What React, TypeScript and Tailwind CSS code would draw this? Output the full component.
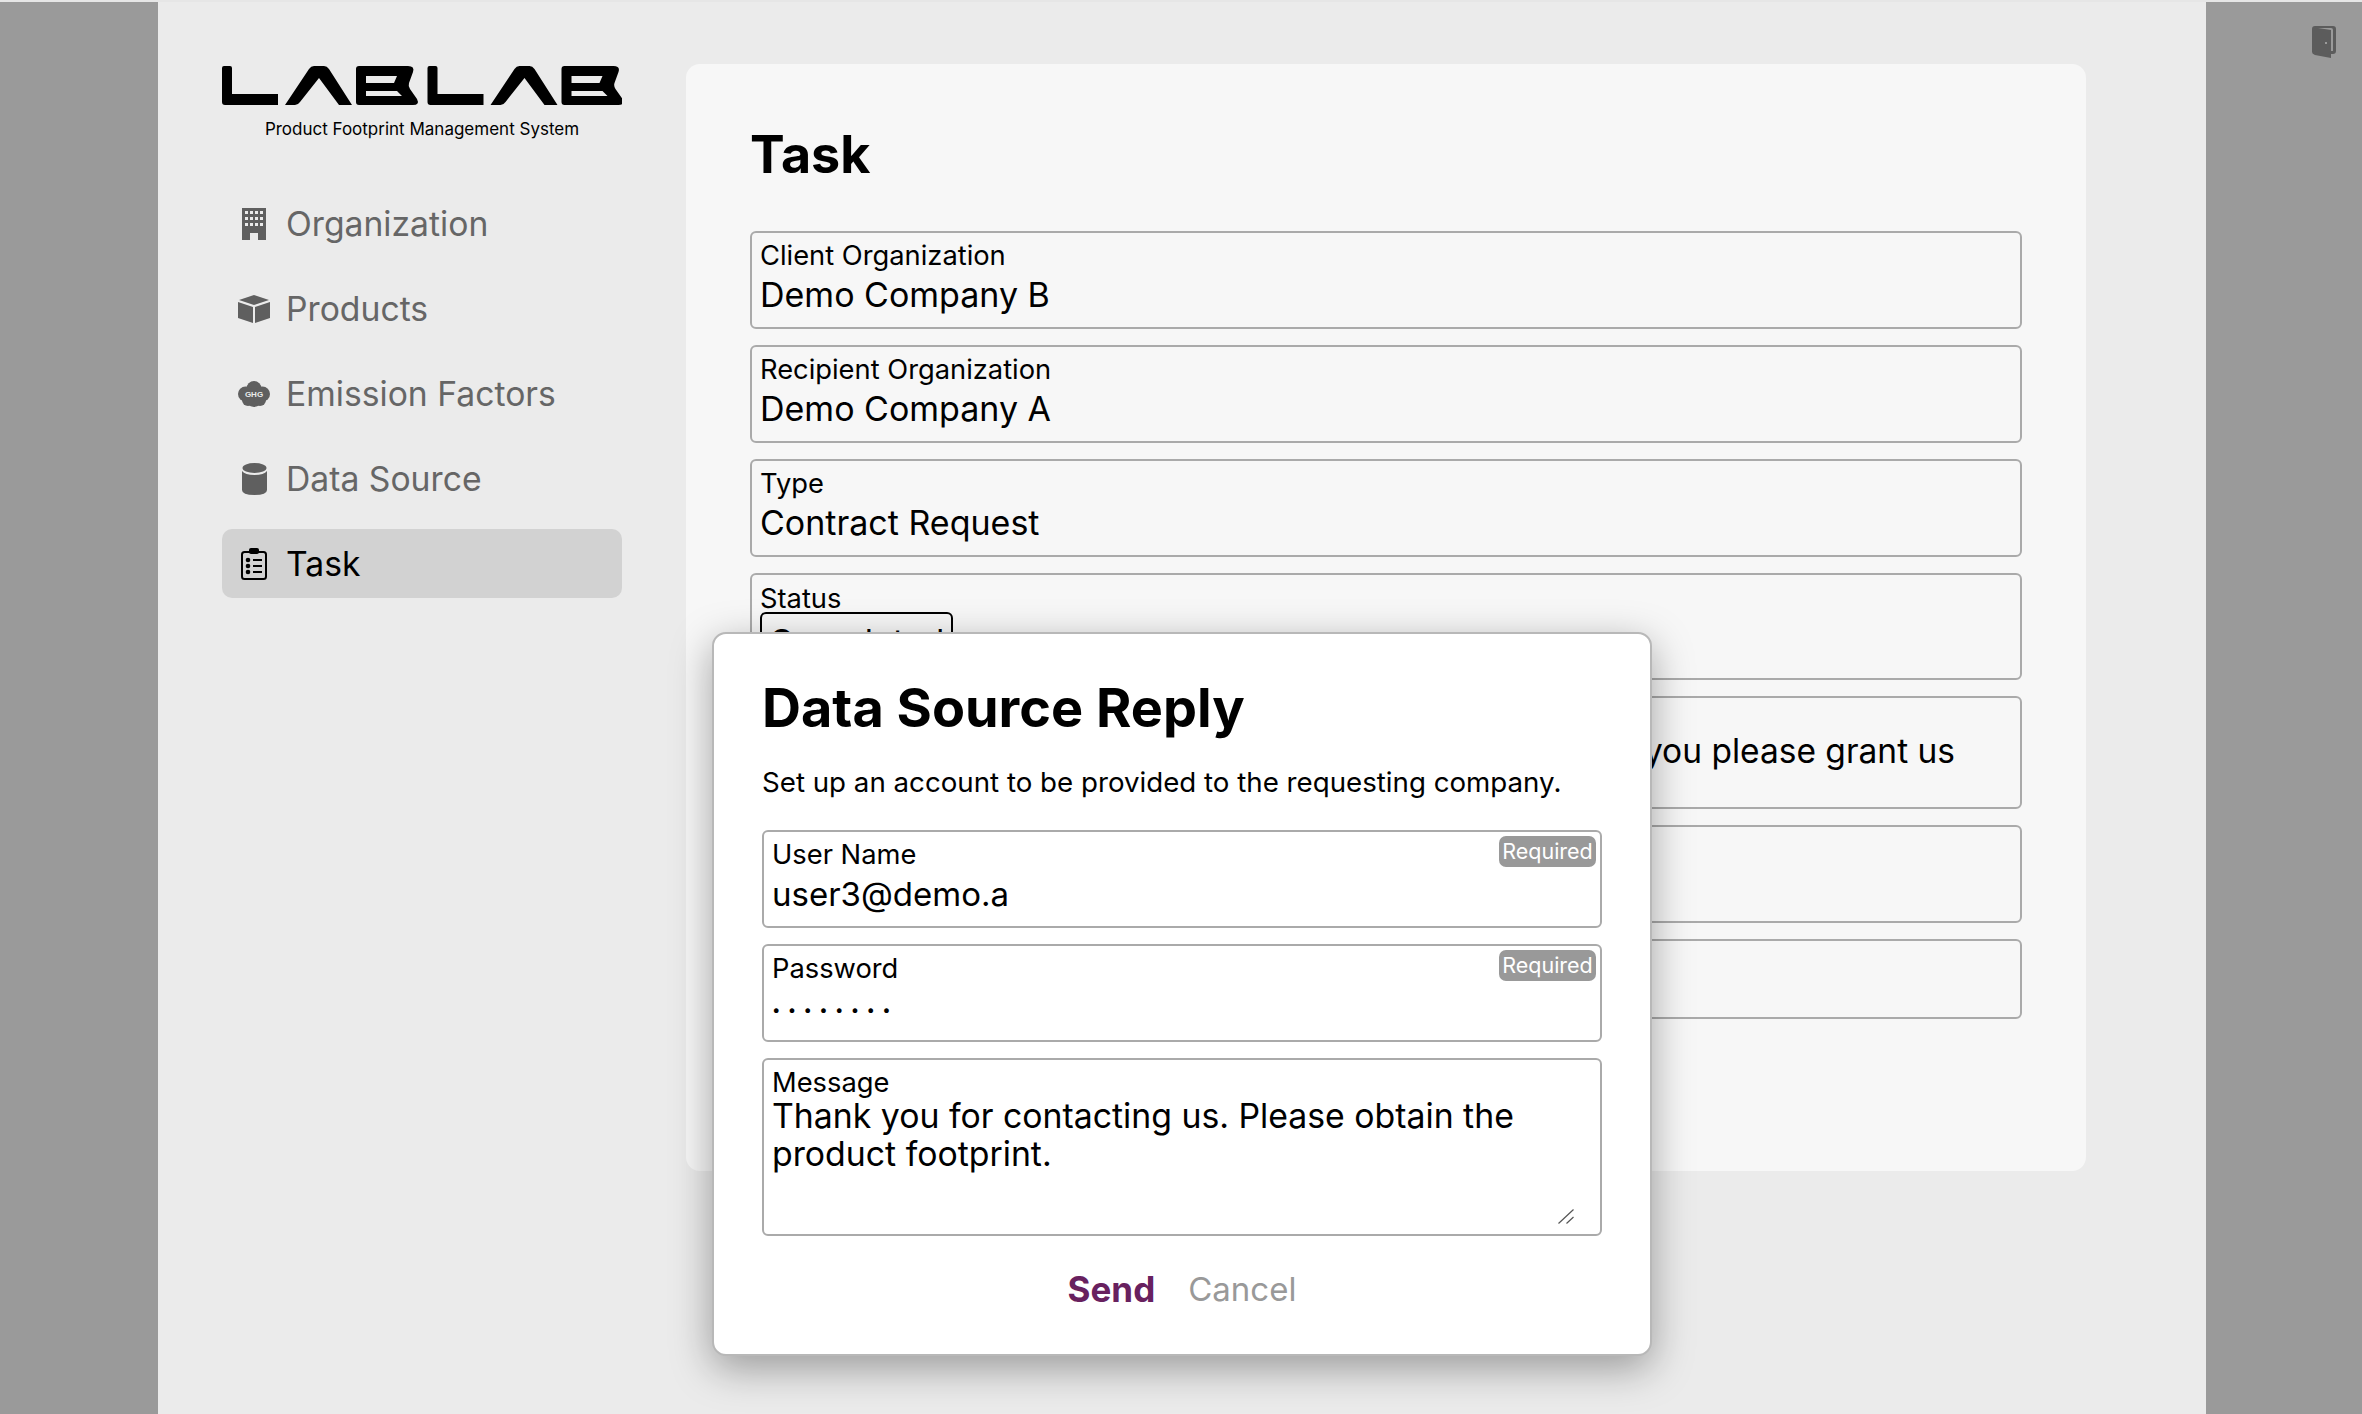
function LogoLetters() {
  return (
    <>
      <path d="M2 0h6a2 2 0 0 1 2 2v26h46v11H3a3 3 0 0 1-3-3V2a2 2 0 0 1 2-2z" />
      <path d="M63 39 87 3q2-3 5-3h10q3 0 5 3l23 36h-13L97 12 78 36q-2 3-5 3z" />
      <path
        fillRule="evenodd"
        d="M137 0h49q7 0 5 6l-4 11q-1 3 1 6l7 10q3 6-4 6h-54q-3 0-3-3V3q0-3 3-3zM144 10v7h28l3-7zM144 25v5h36l-5-5z"
      />
    </>
  );
}

function Logo() {
  return (
    <svg viewBox="0 0 400 39" className="w-[400px] h-[39px]" fill="#000">
      <LogoLetters />
      <g transform="translate(205.5 0)">
        <LogoLetters />
      </g>
    </svg>
  );
}

function BuildingIcon() {
  return (
    <svg viewBox="0 0 24 32" className="w-[24px] h-[32px]" fill="#5f5f5f">
      <path
        fillRule="evenodd"
        d="M0 0h24v32h-8v-7H8v7H0zM3 3v3h3V3zM8 3v3h3V3zM13 3v3h3V3zM18 3v3h3V3zM3 9v3h3V9zM8 9v3h3V9zM13 9v3h3V9zM18 9v3h3V9zM3 15v3h3v-3zM8 15v3h3v-3zM13 15v3h3v-3zM18 15v3h3v-3z"
      />
    </svg>
  );
}

function CubeIcon() {
  return (
    <svg viewBox="0 0 32 28" className="w-[32px] h-[28px]" fill="#5f5f5f">
      <path d="M16 0 31 5 16 10 1 5z" />
      <path d="M0 7l15 5v16L0 23z" />
      <path d="M32 7 17 12v16l15-5z" />
    </svg>
  );
}

function GhgIcon() {
  return (
    <svg viewBox="0 0 32 26" className="w-[32px] h-[26px]">
      <g fill="#5f5f5f">
        <circle cx="16" cy="7.500" r="7.500" />
        <circle cx="7.500" cy="13" r="7.500" />
        <circle cx="24.500" cy="13" r="7.500" />
        <circle cx="16" cy="17.500" r="8.500" />
        <circle cx="10" cy="19" r="6" />
        <circle cx="22" cy="19" r="6" />
      </g>
      <text x="16" y="16" textAnchor="middle" fontSize="8" fontWeight="700" fill="#ebebeb" fontFamily="'Liberation Sans', sans-serif">
        GHG
      </text>
    </svg>
  );
}

function DatabaseIcon() {
  return (
    <svg viewBox="0 0 25 32" className="w-[25px] h-[32px]" fill="#5f5f5f">
      <ellipse cx="12.5" cy="5" rx="12" ry="5" />
      <path d="M0 8q3 4 12.500 4T25 8v19q0 5-12.500 5T0 27z" />
    </svg>
  );
}

function ClipboardIcon() {
  return (
    <svg viewBox="0 0 26 32" className="w-[26px] h-[32px]" fill="none" stroke="#000">
      <rect x="1" y="4" width="24" height="27" rx="2.500" strokeWidth="2" />
      <rect x="8" y="0" width="10" height="6" rx="2" fill="#000" stroke="none" />
      <circle cx="7" cy="12" r="2.300" fill="#000" stroke="none" />
      <circle cx="7" cy="18" r="2.300" fill="#000" stroke="none" />
      <circle cx="7" cy="24" r="2.300" fill="#000" stroke="none" />
      <path d="M12 12h9M12 18h9M12 24h9" strokeWidth="2" />
    </svg>
  );
}

function DoorIcon() {
  return (
    <svg viewBox="0 0 24 33" className="w-[24px] h-[33px]">
      <path fill="#5c5c5c" d="M3 1h18q3 0 3 3v22q0 3-3 3h-2v4L3 30q-3-1-3-3V4q0-3 3-3z" />
      <path fill="#9a9a9a" d="M6 3h13q2 0 2 2v21h-2V5z" />
      <rect x="13" y="17" width="2" height="2" fill="#9a9a9a" />
    </svg>
  );
}

const navItems = [
  { label: "Organization", icon: <BuildingIcon /> },
  { label: "Products", icon: <CubeIcon /> },
  { label: "Emission Factors", icon: <GhgIcon /> },
  { label: "Data Source", icon: <DatabaseIcon /> },
  { label: "Task", icon: <ClipboardIcon />, active: true },
];

function Sidebar() {
  return (
    <aside className="w-[400px] shrink-0">
      <div className="pt-[2px]">
        <Logo />
      </div>
      <p className="mt-[12px] text-center text-[17px] leading-[24px] text-black">Product Footprint Management System</p>
      <nav className="mt-[48px] flex flex-col gap-[16px]">
        {navItems.map((item) => (
          <a
            key={item.label}
            className={
              item.active
                ? "flex h-[69px] items-center rounded-[10px] bg-[#d2d2d2] text-[33.700px] text-black"
                : "flex h-[69px] items-center rounded-[10px] text-[33.700px] text-[#666666]"
            }
          >
            <span className="flex w-[64px] shrink-0 justify-center">{item.icon}</span>
            <span className="pt-[2px]">{item.label}</span>
          </a>
        ))}
      </nav>
    </aside>
  );
}

function Field({ label, value }: { label: string; value: string }) {
  return (
    <div className="h-[98px] rounded-[6px] border-2 border-[#aaaaaa] px-[8px] pt-[5px]">
      <div className="text-[27.3px] leading-[35px] text-black">{label}</div>
      <div className="text-[34px] leading-[44px] text-black">{value}</div>
    </div>
  );
}

function RequiredBadge() {
  return (
    <span className="absolute right-[4px] top-[4px] flex h-[31px] w-[97px] items-center justify-center rounded-[7px] bg-[#999999] text-[21.500px] text-white">
      Required
    </span>
  );
}

function TaskCard() {
  return (
    <section className="h-[1107px] w-[1400px] shrink-0 rounded-[14px] bg-[#f7f7f7] px-[64px] pt-[56px]">
      <h1 className="text-[52px] font-bold leading-[70px] text-black">Task</h1>
      <div className="mt-[41px] flex flex-col gap-[16px]">
        <Field label="Client Organization" value="Demo Company B" />
        <Field label="Recipient Organization" value="Demo Company A" />
        <Field label="Type" value="Contract Request" />
        <div className="h-[107px] rounded-[6px] border-2 border-[#aaaaaa] px-[8px] pt-[5px]">
          <div className="-mb-[5px] text-[27.3px] leading-[37px] text-black">Status</div>
          <span className="inline-block rounded-[6px] border-2 border-black px-[7px] pt-[6px] text-[34px] leading-[44px] text-black">
            Completed
          </span>
        </div>
        <div className="flex h-[113px] items-center justify-end rounded-[6px] border-2 border-[#aaaaaa] px-[65px] pb-[2px]">
          <span className="text-[33.500px] text-black">Could you please grant us</span>
        </div>
        <div className="h-[98px] rounded-[6px] border-2 border-[#aaaaaa]" />
        <div className="h-[80px] rounded-[6px] border-2 border-[#aaaaaa]" />
      </div>
    </section>
  );
}

function InputField({ label, value, type }: { label: string; value: string; type: string }) {
  const isPassword = type === "password";
  return (
    <label className="relative block h-[98px] rounded-[6px] border-2 border-[#aaaaaa] px-[8px] pt-[5px]">
      <span className="block text-[27.3px] leading-[35px] text-black">{label}</span>
      <input
        readOnly
        type={type}
        value={value}
        className={
          isPassword
            ? "block h-[44px] w-full bg-transparent pt-[3px] text-[15px] tracking-[7.300px] text-black outline-none"
            : "block h-[44px] w-full bg-transparent text-[33px] leading-[44px] text-black outline-none"
        }
      />
      <RequiredBadge />
    </label>
  );
}

function ReplyDialog() {
  return (
    <div className="absolute left-[712px] top-[632px] h-[724px] w-[940px] rounded-[14px] border-2 border-[#b8b8b8] bg-white px-[48px] pt-[39px] shadow-[0_12px_40px_rgba(0,0,0,0.35)]">
      <h2 className="text-[54px] font-bold leading-[70px] text-black">Data Source Reply</h2>
      <p className="mt-[19px] text-[27.700px] leading-[40px] text-black">
        Set up an account to be provided to the requesting company.
      </p>
      <div className="mt-[28px] flex flex-col gap-[16px]">
        <InputField label="User Name" value="user3@demo.a" type="text" />
        <InputField label="Password" value="password" type="password" />
        <label className="relative block h-[178px] rounded-[6px] border-2 border-[#aaaaaa] px-[8px] pt-[9px]">
          <span className="block text-[27.3px] leading-[28px] text-black">Message</span>
          <textarea
            readOnly
            value="Thank you for contacting us. Please obtain the product footprint."
            className="block h-[136px] w-full resize-none bg-transparent text-[33.800px] leading-[38px] text-black outline-none"
          />
          {/* resize grip */}
          <svg viewBox="0 0 16 15" className="absolute right-[26px] bottom-[10px] h-[15px] w-[16px]" fill="none" stroke="#555555" strokeWidth="1.200">
            <path d="M0.500 14.500 15.500 0.500M8.500 14.500l7-6.500" />
          </svg>
        </label>
      </div>
      <div className="mt-[31px] flex justify-center gap-[33px] text-[35px] leading-[44px]">
        <button className="font-bold text-[#68215f]">Send</button>
        <button className="text-[33px] text-[#999999]">Cancel</button>
      </div>
    </div>
  );
}

export default function App() {
  return (
    <div className="relative h-[1414px] w-[2362px] overflow-hidden bg-[#9a9a9a] font-['Inter',sans-serif]">
      <div className="h-[2px] bg-[#e6e6e6]" />
      <div className="ml-[158px] mr-[156px] flex h-[1412px] gap-[64px] bg-[#ebebeb] pl-[64px] pt-[62px]">
        <Sidebar />
        <TaskCard />
      </div>
      <div className="absolute left-[2312px] top-[25px]">
        <DoorIcon />
      </div>
      <ReplyDialog />
    </div>
  );
}
